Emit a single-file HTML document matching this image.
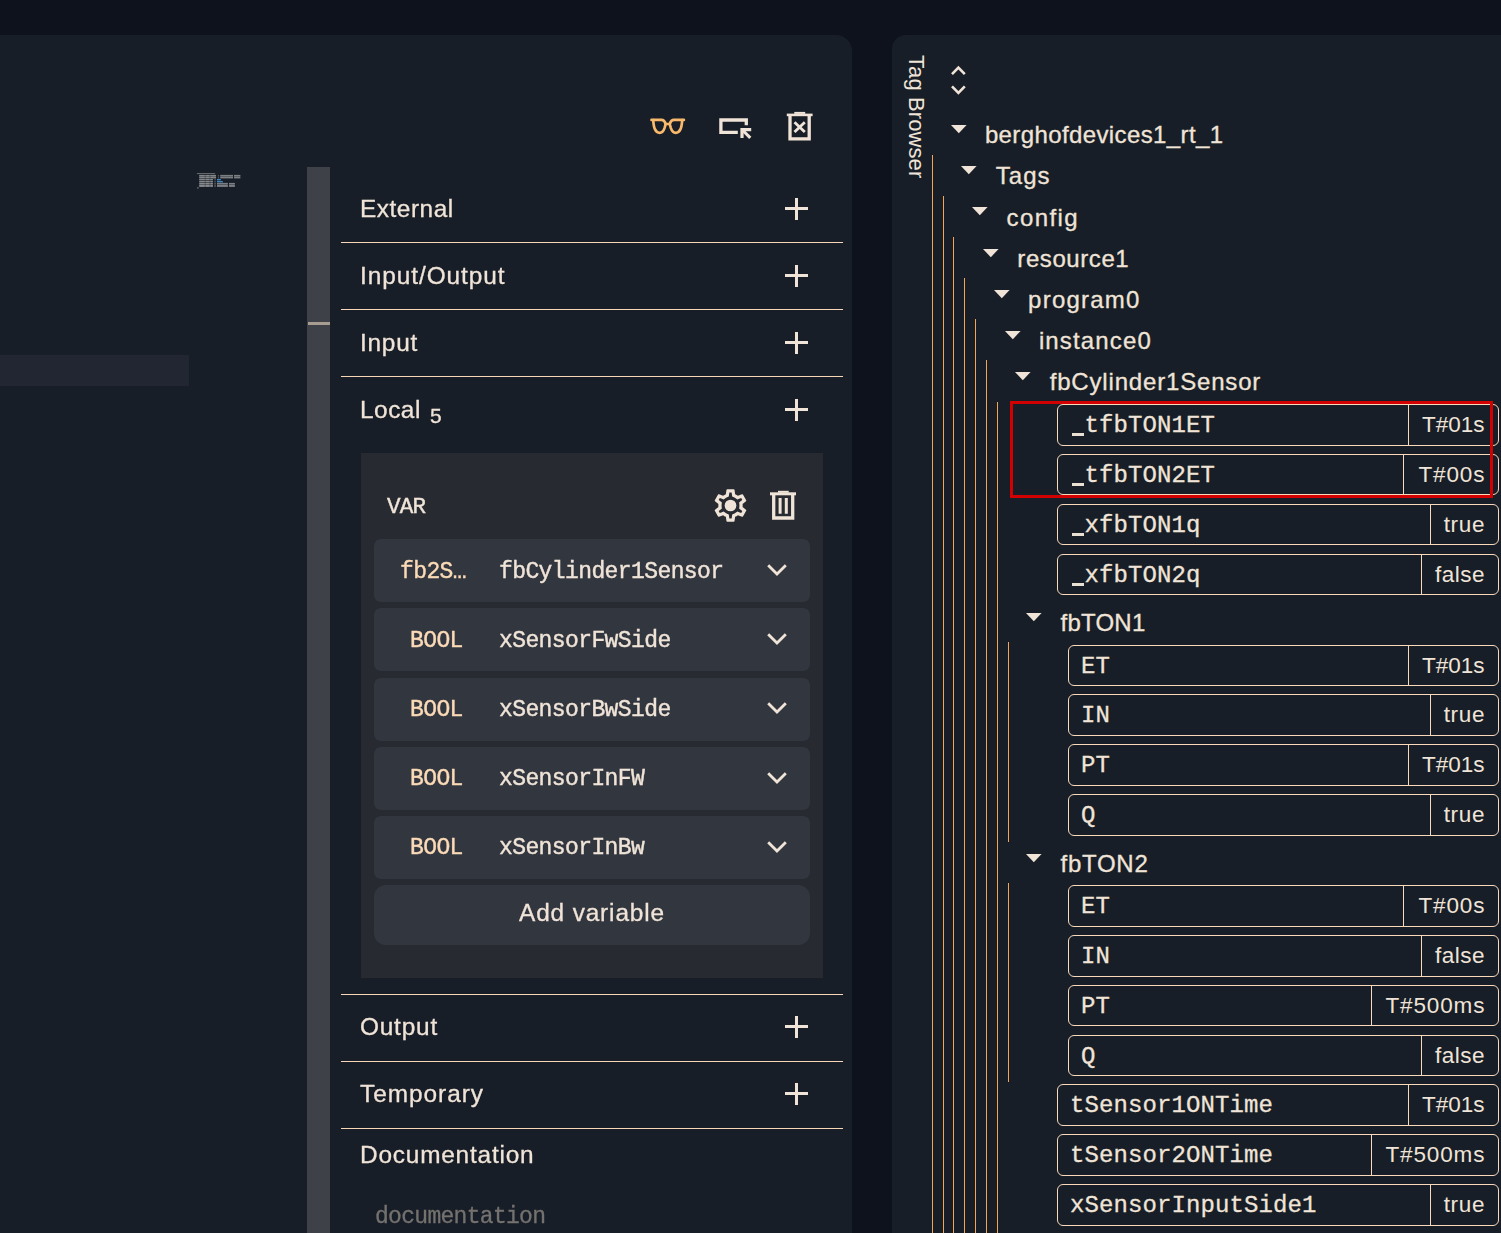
<!DOCTYPE html>
<html><head><meta charset="utf-8"><title>Tag Browser</title>
<style>
html,body{margin:0;padding:0;background:#0e121d;}
body{width:1501px;height:1233px;overflow:hidden;position:relative;font-family:"Liberation Sans",sans-serif;}
.a{position:absolute;display:block}
.t{position:absolute;white-space:pre;line-height:1;}
.s{font-family:"Liberation Sans",sans-serif}
.m{font-family:"Liberation Mono",monospace}
.g{will-change:transform}
.bx{box-sizing:border-box;border:1px solid #fbdabb;border-radius:6px}
</style></head><body>
<div class="a" style="left:-40.00px;top:35.00px;width:892.00px;height:1300.00px;background:#181e27;border-radius:16px;"></div>
<div class="a" style="left:892.00px;top:35.00px;width:700.00px;height:1300.00px;background:#181e27;border-radius:14px;"></div>
<div class="a" style="left:0.00px;top:355.00px;width:189.00px;height:31.00px;background:#222632;"></div>
<div class="a" style="left:307.00px;top:167.00px;width:23.00px;height:1100.00px;background:#3e4147;"></div>
<div class="a" style="left:308.00px;top:322.00px;width:22.00px;height:3.00px;background:#a89b8f;"></div>
<svg class="a" style="left:190px;top:168px" width="60" height="26" viewBox="190 168 60 26"><rect x="196.90" y="173.00" width="18.20" height="1.10" fill="rgba(205,205,205,0.42)"/><rect x="199.20" y="174.90" width="16.80" height="1.70" fill="rgba(205,205,205,0.60)"/><rect x="217.90" y="174.90" width="0.90" height="1.70" fill="rgba(205,205,205,0.35)"/><rect x="220.20" y="174.90" width="12.80" height="1.70" fill="rgba(205,205,205,0.55)"/><rect x="234.00" y="174.90" width="6.40" height="1.70" fill="rgba(205,205,205,0.55)"/><rect x="199.20" y="176.90" width="16.80" height="1.50" fill="rgba(205,205,205,0.60)"/><rect x="217.90" y="176.90" width="0.90" height="1.50" fill="rgba(205,205,205,0.35)"/><rect x="220.20" y="176.90" width="12.80" height="1.50" fill="rgba(205,205,205,0.55)"/><rect x="234.00" y="176.90" width="6.40" height="1.50" fill="rgba(205,205,205,0.55)"/><rect x="199.20" y="178.90" width="13.70" height="1.50" fill="rgba(205,205,205,0.60)"/><rect x="214.40" y="178.90" width="1.40" height="1.50" fill="rgba(205,205,205,0.30)"/><rect x="199.20" y="181.00" width="13.70" height="1.40" fill="rgba(205,205,205,0.60)"/><rect x="214.40" y="181.00" width="1.40" height="1.40" fill="rgba(205,205,205,0.30)"/><rect x="199.20" y="182.90" width="13.70" height="1.70" fill="rgba(205,205,205,0.62)"/><rect x="214.30" y="182.90" width="1.50" height="1.70" fill="rgba(205,205,205,0.35)"/><rect x="217.00" y="182.90" width="10.90" height="1.70" fill="rgba(205,205,205,0.55)"/><rect x="229.00" y="182.90" width="5.90" height="1.70" fill="rgba(205,205,205,0.55)"/><rect x="199.20" y="185.00" width="13.70" height="1.90" fill="rgba(205,205,205,0.62)"/><rect x="214.30" y="185.00" width="1.50" height="1.90" fill="rgba(205,205,205,0.35)"/><rect x="217.00" y="185.00" width="10.90" height="1.90" fill="rgba(205,205,205,0.55)"/><rect x="229.00" y="185.00" width="5.90" height="1.90" fill="rgba(205,205,205,0.55)"/><rect x="217.00" y="178.90" width="3.80" height="1.50" fill="rgba(70,150,215,.85)"/><rect x="217.00" y="181.00" width="5.90" height="1.40" fill="rgba(70,150,215,.85)"/><rect x="197.00" y="186.90" width="1.80" height="1.90" fill="rgba(205,205,205,0.30)"/><rect x="204.80" y="174.90" width="0.70" height="12.00" fill="rgba(24,30,39,.5)"/><rect x="209.60" y="174.90" width="0.70" height="12.00" fill="rgba(24,30,39,.5)"/></svg>
<svg class="a" style="left:646px;top:110px" width="44" height="32" viewBox="646 110 44 32" fill="none" stroke="#f8b96c" stroke-width="2.7" stroke-linecap="round" stroke-linejoin="round"><path d="M651.5 119.9H661.6C664 119.9 665 121.9 665.7 124"/><path d="M653.2 120.1C653.5 124.3 653.9 127.1 654.9 129.2C656 131.6 657.7 132.8 659.6 132.8C662 132.8 663.6 130.9 664.5 128.1C665 126.4 665.4 125.1 665.7 124"/><g transform="translate(1335.4,0) scale(-1,1)"><path d="M651.5 119.9H661.6C664 119.9 665 121.9 665.7 124"/><path d="M653.2 120.1C653.5 124.3 653.9 127.1 654.9 129.2C656 131.6 657.7 132.8 659.6 132.8C662 132.8 663.6 130.9 664.5 128.1C665 126.4 665.4 125.1 665.7 124"/></g><path d="M665.7 124H669.7"/></svg>
<svg class="a" style="left:715px;top:114px" width="40" height="28" viewBox="715 114 40 28" fill="none" stroke="#f0e4d8" stroke-width="3.3" stroke-linejoin="miter">
<path d="M737.8 132.4H720.9V120H746.3V125.3"/>
<path d="M742 137.9V129.6H751.2" stroke-width="3.2"/>
<path d="M742.4 130L750.3 137.8" stroke-width="3.1"/>
</svg>
<svg class="a" style="left:784px;top:110px" width="32" height="34" viewBox="784 110 32 34" fill="none" stroke="#f0e4d8" stroke-width="3.3">
<path d="M794.3 112.9h10.9" stroke-width="2"/>
<path d="M786.8 114.9h25.8" stroke-width="2.6"/>
<path d="M790 115V138.9H809.2V115"/>
<path d="M794.5 122.2L804.8 132M804.8 122.2L794.5 132" stroke-width="2.8"/>
</svg>
<div class="t s  g" style="top:196.84px;font-size:24.40px;color:#f0e4d8;letter-spacing:0.536px;-webkit-text-stroke:0.30px #f0e4d8;left:360.20px;">External</div>
<div class="a" style="left:785.00px;top:207.40px;width:23.00px;height:3.00px;background:#f0e4d8;"></div>
<div class="a" style="left:795.00px;top:197.90px;width:3.00px;height:22.00px;background:#f0e4d8;"></div>
<div class="t s  g" style="top:263.84px;font-size:24.40px;color:#f0e4d8;letter-spacing:0.934px;-webkit-text-stroke:0.30px #f0e4d8;left:360.20px;">Input/Output</div>
<div class="a" style="left:785.00px;top:274.40px;width:23.00px;height:3.00px;background:#f0e4d8;"></div>
<div class="a" style="left:795.00px;top:264.90px;width:3.00px;height:22.00px;background:#f0e4d8;"></div>
<div class="t s  g" style="top:330.84px;font-size:24.40px;color:#f0e4d8;letter-spacing:0.746px;-webkit-text-stroke:0.30px #f0e4d8;left:360.20px;">Input</div>
<div class="a" style="left:785.00px;top:341.40px;width:23.00px;height:3.00px;background:#f0e4d8;"></div>
<div class="a" style="left:795.00px;top:331.90px;width:3.00px;height:22.00px;background:#f0e4d8;"></div>
<div class="t s  g" style="top:397.74px;font-size:24.40px;color:#f0e4d8;letter-spacing:0.514px;-webkit-text-stroke:0.30px #f0e4d8;left:360.20px;">Local</div>
<div class="a" style="left:785.00px;top:408.30px;width:23.00px;height:3.00px;background:#f0e4d8;"></div>
<div class="a" style="left:795.00px;top:398.80px;width:3.00px;height:22.00px;background:#f0e4d8;"></div>
<div class="t s  g" style="top:1014.64px;font-size:24.40px;color:#f0e4d8;letter-spacing:0.792px;-webkit-text-stroke:0.30px #f0e4d8;left:360.20px;">Output</div>
<div class="a" style="left:785.00px;top:1025.20px;width:23.00px;height:3.00px;background:#f0e4d8;"></div>
<div class="a" style="left:795.00px;top:1015.70px;width:3.00px;height:22.00px;background:#f0e4d8;"></div>
<div class="t s  g" style="top:1081.64px;font-size:24.40px;color:#f0e4d8;letter-spacing:0.971px;-webkit-text-stroke:0.30px #f0e4d8;left:360.20px;">Temporary</div>
<div class="a" style="left:785.00px;top:1092.20px;width:23.00px;height:3.00px;background:#f0e4d8;"></div>
<div class="a" style="left:795.00px;top:1082.70px;width:3.00px;height:22.00px;background:#f0e4d8;"></div>
<div class="t s  g" style="top:405.02px;font-size:21.00px;color:#f0e4d8;-webkit-text-stroke:0.30px #f0e4d8;left:429.60px;">5</div>
<div class="a" style="left:341.00px;top:242.00px;width:502.00px;height:1.00px;background:#f7d7b6;"></div>
<div class="a" style="left:341.00px;top:309.00px;width:502.00px;height:1.00px;background:#f7d7b6;"></div>
<div class="a" style="left:341.00px;top:376.00px;width:502.00px;height:1.00px;background:#f7d7b6;"></div>
<div class="a" style="left:341.00px;top:994.00px;width:502.00px;height:1.00px;background:#f7d7b6;"></div>
<div class="a" style="left:341.00px;top:1061.00px;width:502.00px;height:1.00px;background:#f7d7b6;"></div>
<div class="a" style="left:341.00px;top:1128.00px;width:502.00px;height:1.00px;background:#f7d7b6;"></div>
<div class="t s  g" style="top:1142.54px;font-size:24.40px;color:#f0e4d8;letter-spacing:0.799px;-webkit-text-stroke:0.30px #f0e4d8;left:360.20px;">Documentation</div>
<div class="t m  g" style="top:1206.18px;font-size:23.00px;color:#74726f;letter-spacing:-0.700px;-webkit-text-stroke:0.30px #74726f;left:374.50px;">documentation</div>
<div class="a" style="left:361.00px;top:453.00px;width:462.00px;height:525.00px;background:#272a30;"></div>
<div class="t m  g" style="top:495.69px;font-size:22.60px;color:#f0e4d8;letter-spacing:-0.760px;-webkit-text-stroke:0.40px #f0e4d8;left:387.30px;">VAR</div>
<svg class="a" style="left:710.6px;top:485.5px" width="39" height="39" viewBox="0 0 24 24" fill="#f0e4d8"><path d="M19.43 12.98c.04-.32.07-.64.07-.98 0-.34-.03-.66-.07-.98l2.11-1.65c.19-.15.24-.42.12-.64l-2-3.46a.5.5 0 0 0-.61-.22l-2.49 1c-.52-.4-1.08-.73-1.69-.98l-.38-2.65A.488.488 0 0 0 14 2h-4c-.25 0-.46.18-.49.42l-.38 2.65c-.61.25-1.17.59-1.69.98l-2.49-1a.566.566 0 0 0-.18-.03c-.17 0-.34.09-.43.25l-2 3.46c-.13.22-.07.49.12.64l2.11 1.65c-.04.32-.07.65-.07.98 0 .33.03.66.07.98l-2.11 1.65c-.19.15-.24.42-.12.64l2 3.46a.5.5 0 0 0 .61.22l2.49-1c.52.4 1.08.73 1.69.98l.38 2.65c.03.24.24.42.49.42h4c.25 0 .46-.18.49-.42l.38-2.65c.61-.25 1.17-.59 1.69-.98l2.49 1c.06.02.12.03.18.03.17 0 .34-.09.43-.25l2-3.46c.12-.22.07-.49-.12-.64l-2.11-1.65zm-1.98-1.71c.04.31.05.52.05.73 0 .21-.02.43-.05.73l-.14 1.13.89.7 1.08.84-.7 1.21-1.27-.51-1.04-.42-.9.68c-.43.32-.84.56-1.25.73l-1.06.43-.16 1.13-.2 1.35h-1.4l-.19-1.35-.16-1.13-1.06-.43c-.43-.18-.83-.41-1.23-.71l-.91-.7-1.06.43-1.27.51-.7-1.21 1.08-.84.89-.7-.14-1.13c-.03-.31-.05-.54-.05-.74s.02-.43.05-.73l.14-1.13-.89-.7-1.08-.84.7-1.21 1.27.51 1.04.42.9-.68c.43-.32.84-.56 1.25-.73l1.06-.43.16-1.13.2-1.35h1.39l.19 1.35.16 1.13 1.06.43c.43.18.83.41 1.23.71l.91.7 1.06-.43 1.27-.51.7 1.21-1.07.85-.89.7.14 1.13z"/><circle cx="12" cy="12" r="3.6"/></svg>
<svg class="a" style="left:768px;top:488px" width="30" height="34" viewBox="768 488 30 34" fill="none" stroke="#f0e4d8" stroke-width="3.3">
<path d="M778 491.8h10.7" stroke-width="2"/>
<path d="M770 493.8h26" stroke-width="3"/>
<path d="M773.7 494V518H792.7V494"/>
<path d="M780.1 498V513.7M786.3 498V513.7" stroke-width="3"/>
</svg>
<div class="a" style="left:374.00px;top:539.00px;width:436.00px;height:63.00px;background:#32363f;border-radius:7px;"></div>
<div class="t m  g" style="top:560.58px;font-size:23.00px;color:#fbdab7;letter-spacing:-0.600px;-webkit-text-stroke:0.40px #fbdab7;left:400.00px;">fb2S…</div>
<div class="t m  g" style="top:560.58px;font-size:23.00px;color:#f0e4d8;letter-spacing:-0.600px;-webkit-text-stroke:0.40px #f0e4d8;left:498.60px;">fbCylinder1Sensor</div>
<svg class="a" style="left:764px;top:560.80px" width="26" height="18" viewBox="0 0 26 18" fill="none" stroke="#f0e4d8" stroke-width="2.8"><path d="M4.2 4.2L13 13L21.8 4.2"/></svg>
<div class="a" style="left:374.00px;top:608.00px;width:436.00px;height:63.00px;background:#32363f;border-radius:7px;"></div>
<div class="t m  g" style="top:629.58px;font-size:23.00px;color:#fbdab7;letter-spacing:-0.600px;-webkit-text-stroke:0.40px #fbdab7;left:410.30px;">BOOL</div>
<div class="t m  g" style="top:629.58px;font-size:23.00px;color:#f0e4d8;letter-spacing:-0.600px;-webkit-text-stroke:0.40px #f0e4d8;left:498.60px;">xSensorFwSide</div>
<svg class="a" style="left:764px;top:629.80px" width="26" height="18" viewBox="0 0 26 18" fill="none" stroke="#f0e4d8" stroke-width="2.8"><path d="M4.2 4.2L13 13L21.8 4.2"/></svg>
<div class="a" style="left:374.00px;top:677.60px;width:436.00px;height:63.00px;background:#32363f;border-radius:7px;"></div>
<div class="t m  g" style="top:699.18px;font-size:23.00px;color:#fbdab7;letter-spacing:-0.600px;-webkit-text-stroke:0.40px #fbdab7;left:410.30px;">BOOL</div>
<div class="t m  g" style="top:699.18px;font-size:23.00px;color:#f0e4d8;letter-spacing:-0.600px;-webkit-text-stroke:0.40px #f0e4d8;left:498.60px;">xSensorBwSide</div>
<svg class="a" style="left:764px;top:699.40px" width="26" height="18" viewBox="0 0 26 18" fill="none" stroke="#f0e4d8" stroke-width="2.8"><path d="M4.2 4.2L13 13L21.8 4.2"/></svg>
<div class="a" style="left:374.00px;top:746.80px;width:436.00px;height:63.00px;background:#32363f;border-radius:7px;"></div>
<div class="t m  g" style="top:768.38px;font-size:23.00px;color:#fbdab7;letter-spacing:-0.600px;-webkit-text-stroke:0.40px #fbdab7;left:410.30px;">BOOL</div>
<div class="t m  g" style="top:768.38px;font-size:23.00px;color:#f0e4d8;letter-spacing:-0.600px;-webkit-text-stroke:0.40px #f0e4d8;left:498.60px;">xSensorInFW</div>
<svg class="a" style="left:764px;top:768.60px" width="26" height="18" viewBox="0 0 26 18" fill="none" stroke="#f0e4d8" stroke-width="2.8"><path d="M4.2 4.2L13 13L21.8 4.2"/></svg>
<div class="a" style="left:374.00px;top:815.90px;width:436.00px;height:63.00px;background:#32363f;border-radius:7px;"></div>
<div class="t m  g" style="top:837.48px;font-size:23.00px;color:#fbdab7;letter-spacing:-0.600px;-webkit-text-stroke:0.40px #fbdab7;left:410.30px;">BOOL</div>
<div class="t m  g" style="top:837.48px;font-size:23.00px;color:#f0e4d8;letter-spacing:-0.600px;-webkit-text-stroke:0.40px #f0e4d8;left:498.60px;">xSensorInBw</div>
<svg class="a" style="left:764px;top:837.70px" width="26" height="18" viewBox="0 0 26 18" fill="none" stroke="#f0e4d8" stroke-width="2.8"><path d="M4.2 4.2L13 13L21.8 4.2"/></svg>
<div class="a" style="left:374.00px;top:885.00px;width:436.00px;height:60.00px;background:#32363f;border-radius:12px;"></div>
<div class="t s  g" style="top:901.24px;font-size:24.40px;color:#f0e4d8;letter-spacing:0.863px;-webkit-text-stroke:0.30px #f0e4d8;left:519.00px;">Add variable</div>
<div class="t s" style="left:903.8px;top:55.3px;width:24px;writing-mode:vertical-rl;font-size:22px;letter-spacing:0.1px;line-height:24px;color:#f0e4d8;white-space:nowrap">Tag Browser</div>
<svg class="a" style="left:948px;top:62px" width="22" height="36" viewBox="948 62 22 36" fill="none" stroke="#f0e4d8" stroke-width="2.6"><path d="M952 74.2L958.4 67.6L964.8 74.2"/><path d="M952 86.4L958.4 93L964.8 86.4"/></svg>
<svg class="a" style="left:950.60px;top:124.99px" width="16" height="9" viewBox="0 0 16 9"><path d="M0 0H15.6L7.8 8.2Z" fill="#f0e4d8"/></svg>
<div class="t s " style="top:123.26px;font-size:24.00px;color:#f0e4d8;letter-spacing:0.384px;-webkit-text-stroke:0.30px #f0e4d8;left:984.90px;">berghofdevices1_rt_1</div>
<svg class="a" style="left:961.40px;top:166.16px" width="16" height="9" viewBox="0 0 16 9"><path d="M0 0H15.6L7.8 8.2Z" fill="#f0e4d8"/></svg>
<div class="t s " style="top:164.43px;font-size:24.00px;color:#f0e4d8;letter-spacing:1.076px;-webkit-text-stroke:0.30px #f0e4d8;left:995.70px;">Tags</div>
<svg class="a" style="left:972.20px;top:207.33px" width="16" height="9" viewBox="0 0 16 9"><path d="M0 0H15.6L7.8 8.2Z" fill="#f0e4d8"/></svg>
<div class="t s " style="top:205.60px;font-size:24.00px;color:#f0e4d8;letter-spacing:1.409px;-webkit-text-stroke:0.30px #f0e4d8;left:1006.50px;">config</div>
<svg class="a" style="left:983.00px;top:248.50px" width="16" height="9" viewBox="0 0 16 9"><path d="M0 0H15.6L7.8 8.2Z" fill="#f0e4d8"/></svg>
<div class="t s " style="top:246.77px;font-size:24.00px;color:#f0e4d8;letter-spacing:0.586px;-webkit-text-stroke:0.30px #f0e4d8;left:1017.30px;">resource1</div>
<svg class="a" style="left:993.80px;top:289.67px" width="16" height="9" viewBox="0 0 16 9"><path d="M0 0H15.6L7.8 8.2Z" fill="#f0e4d8"/></svg>
<div class="t s " style="top:287.94px;font-size:24.00px;color:#f0e4d8;letter-spacing:1.223px;-webkit-text-stroke:0.30px #f0e4d8;left:1028.10px;">program0</div>
<svg class="a" style="left:1004.60px;top:330.84px" width="16" height="9" viewBox="0 0 16 9"><path d="M0 0H15.6L7.8 8.2Z" fill="#f0e4d8"/></svg>
<div class="t s " style="top:329.11px;font-size:24.00px;color:#f0e4d8;letter-spacing:1.140px;-webkit-text-stroke:0.30px #f0e4d8;left:1038.90px;">instance0</div>
<svg class="a" style="left:1015.40px;top:372.01px" width="16" height="9" viewBox="0 0 16 9"><path d="M0 0H15.6L7.8 8.2Z" fill="#f0e4d8"/></svg>
<div class="t s " style="top:370.28px;font-size:24.00px;color:#f0e4d8;letter-spacing:0.827px;-webkit-text-stroke:0.30px #f0e4d8;left:1049.70px;">fbCylinder1Sensor</div>
<div class="a bx" style="left:1057px;top:404px;width:442px;height:42px"></div>
<div class="a" style="left:1408.00px;top:404.00px;width:1.00px;height:42.00px;background:#fbdabb;"></div>
<div class="a" style="left:1072.00px;top:432.80px;width:12.00px;height:3.00px;background:#eadfd3;"></div>
<div class="t m " style="top:414.31px;font-size:24.00px;color:#f0e4d8;letter-spacing:0.100px;-webkit-text-stroke:0.28px #f0e4d8;left:1084.50px;">tfbTON1ET</div>
<div class="t s " style="top:414.15px;font-size:22.50px;color:#f0e4d8;letter-spacing:-0.007px;right:16.51px;">T#01s</div>
<div class="a bx" style="left:1057px;top:454px;width:442px;height:41px"></div>
<div class="a" style="left:1403.00px;top:454.00px;width:1.00px;height:41.00px;background:#fbdabb;"></div>
<div class="a" style="left:1072.00px;top:482.80px;width:12.00px;height:3.00px;background:#eadfd3;"></div>
<div class="t m " style="top:464.31px;font-size:24.00px;color:#f0e4d8;letter-spacing:0.100px;-webkit-text-stroke:0.28px #f0e4d8;left:1084.50px;">tfbTON2ET</div>
<div class="t s " style="top:464.15px;font-size:22.50px;color:#f0e4d8;letter-spacing:0.893px;right:15.61px;">T#00s</div>
<div class="a bx" style="left:1057px;top:504px;width:442px;height:41px"></div>
<div class="a" style="left:1430.00px;top:504.00px;width:1.00px;height:41.00px;background:#fbdabb;"></div>
<div class="a" style="left:1072.00px;top:532.80px;width:12.00px;height:3.00px;background:#eadfd3;"></div>
<div class="t m " style="top:514.31px;font-size:24.00px;color:#f0e4d8;letter-spacing:0.100px;-webkit-text-stroke:0.28px #f0e4d8;left:1084.50px;">xfbTON1q</div>
<div class="t s " style="top:514.15px;font-size:22.50px;color:#f0e4d8;letter-spacing:0.682px;right:15.82px;">true</div>
<div class="a bx" style="left:1057px;top:554px;width:442px;height:41px"></div>
<div class="a" style="left:1421.00px;top:554.00px;width:1.00px;height:41.00px;background:#fbdabb;"></div>
<div class="a" style="left:1072.00px;top:582.80px;width:12.00px;height:3.00px;background:#eadfd3;"></div>
<div class="t m " style="top:564.31px;font-size:24.00px;color:#f0e4d8;letter-spacing:0.100px;-webkit-text-stroke:0.28px #f0e4d8;left:1084.50px;">xfbTON2q</div>
<div class="t s " style="top:564.15px;font-size:22.50px;color:#f0e4d8;letter-spacing:0.495px;right:16.01px;">false</div>
<svg class="a" style="left:1026.20px;top:612.88px" width="16" height="9" viewBox="0 0 16 9"><path d="M0 0H15.6L7.8 8.2Z" fill="#f0e4d8"/></svg>
<div class="t s " style="top:611.15px;font-size:24.00px;color:#f0e4d8;letter-spacing:0.235px;-webkit-text-stroke:0.30px #f0e4d8;left:1060.50px;">fbTON1</div>
<div class="a bx" style="left:1068px;top:645px;width:431px;height:41px"></div>
<div class="a" style="left:1408.00px;top:645.00px;width:1.00px;height:41.00px;background:#fbdabb;"></div>
<div class="t m " style="top:655.31px;font-size:24.00px;color:#f0e4d8;letter-spacing:0.100px;-webkit-text-stroke:0.28px #f0e4d8;left:1081.00px;">ET</div>
<div class="t s " style="top:655.15px;font-size:22.50px;color:#f0e4d8;letter-spacing:-0.007px;right:16.51px;">T#01s</div>
<div class="a bx" style="left:1068px;top:694px;width:431px;height:42px"></div>
<div class="a" style="left:1430.00px;top:694.00px;width:1.00px;height:42.00px;background:#fbdabb;"></div>
<div class="t m " style="top:704.31px;font-size:24.00px;color:#f0e4d8;letter-spacing:0.100px;-webkit-text-stroke:0.28px #f0e4d8;left:1081.00px;">IN</div>
<div class="t s " style="top:704.15px;font-size:22.50px;color:#f0e4d8;letter-spacing:0.682px;right:15.82px;">true</div>
<div class="a bx" style="left:1068px;top:744px;width:431px;height:42px"></div>
<div class="a" style="left:1408.00px;top:744.00px;width:1.00px;height:42.00px;background:#fbdabb;"></div>
<div class="t m " style="top:754.31px;font-size:24.00px;color:#f0e4d8;letter-spacing:0.100px;-webkit-text-stroke:0.28px #f0e4d8;left:1081.00px;">PT</div>
<div class="t s " style="top:754.15px;font-size:22.50px;color:#f0e4d8;letter-spacing:-0.007px;right:16.51px;">T#01s</div>
<div class="a bx" style="left:1068px;top:794px;width:431px;height:42px"></div>
<div class="a" style="left:1430.00px;top:794.00px;width:1.00px;height:42.00px;background:#fbdabb;"></div>
<div class="t m " style="top:804.31px;font-size:24.00px;color:#f0e4d8;letter-spacing:0.100px;-webkit-text-stroke:0.28px #f0e4d8;left:1081.00px;">Q</div>
<div class="t s " style="top:804.15px;font-size:22.50px;color:#f0e4d8;letter-spacing:0.682px;right:15.82px;">true</div>
<svg class="a" style="left:1026.20px;top:854.15px" width="16" height="9" viewBox="0 0 16 9"><path d="M0 0H15.6L7.8 8.2Z" fill="#f0e4d8"/></svg>
<div class="t s " style="top:852.42px;font-size:24.00px;color:#f0e4d8;letter-spacing:0.735px;-webkit-text-stroke:0.30px #f0e4d8;left:1060.50px;">fbTON2</div>
<div class="a bx" style="left:1068px;top:885px;width:431px;height:42px"></div>
<div class="a" style="left:1403.00px;top:885.00px;width:1.00px;height:42.00px;background:#fbdabb;"></div>
<div class="t m " style="top:895.31px;font-size:24.00px;color:#f0e4d8;letter-spacing:0.100px;-webkit-text-stroke:0.28px #f0e4d8;left:1081.00px;">ET</div>
<div class="t s " style="top:895.15px;font-size:22.50px;color:#f0e4d8;letter-spacing:0.893px;right:15.61px;">T#00s</div>
<div class="a bx" style="left:1068px;top:935px;width:431px;height:42px"></div>
<div class="a" style="left:1421.00px;top:935.00px;width:1.00px;height:42.00px;background:#fbdabb;"></div>
<div class="t m " style="top:945.31px;font-size:24.00px;color:#f0e4d8;letter-spacing:0.100px;-webkit-text-stroke:0.28px #f0e4d8;left:1081.00px;">IN</div>
<div class="t s " style="top:945.15px;font-size:22.50px;color:#f0e4d8;letter-spacing:0.495px;right:16.01px;">false</div>
<div class="a bx" style="left:1068px;top:985px;width:431px;height:41px"></div>
<div class="a" style="left:1371.00px;top:985.00px;width:1.00px;height:41.00px;background:#fbdabb;"></div>
<div class="t m " style="top:995.31px;font-size:24.00px;color:#f0e4d8;letter-spacing:0.100px;-webkit-text-stroke:0.28px #f0e4d8;left:1081.00px;">PT</div>
<div class="t s " style="top:995.15px;font-size:22.50px;color:#f0e4d8;letter-spacing:0.887px;right:15.61px;">T#500ms</div>
<div class="a bx" style="left:1068px;top:1035px;width:431px;height:41px"></div>
<div class="a" style="left:1421.00px;top:1035.00px;width:1.00px;height:41.00px;background:#fbdabb;"></div>
<div class="t m " style="top:1045.31px;font-size:24.00px;color:#f0e4d8;letter-spacing:0.100px;-webkit-text-stroke:0.28px #f0e4d8;left:1081.00px;">Q</div>
<div class="t s " style="top:1045.15px;font-size:22.50px;color:#f0e4d8;letter-spacing:0.495px;right:16.01px;">false</div>
<div class="a bx" style="left:1057px;top:1084px;width:442px;height:42px"></div>
<div class="a" style="left:1408.00px;top:1084.00px;width:1.00px;height:42.00px;background:#fbdabb;"></div>
<div class="t m " style="top:1094.31px;font-size:24.00px;color:#f0e4d8;letter-spacing:0.100px;-webkit-text-stroke:0.28px #f0e4d8;left:1070.00px;">tSensor1ONTime</div>
<div class="t s " style="top:1094.15px;font-size:22.50px;color:#f0e4d8;letter-spacing:-0.007px;right:16.51px;">T#01s</div>
<div class="a bx" style="left:1057px;top:1134px;width:442px;height:42px"></div>
<div class="a" style="left:1371.00px;top:1134.00px;width:1.00px;height:42.00px;background:#fbdabb;"></div>
<div class="t m " style="top:1144.31px;font-size:24.00px;color:#f0e4d8;letter-spacing:0.100px;-webkit-text-stroke:0.28px #f0e4d8;left:1070.00px;">tSensor2ONTime</div>
<div class="t s " style="top:1144.15px;font-size:22.50px;color:#f0e4d8;letter-spacing:0.887px;right:15.61px;">T#500ms</div>
<div class="a bx" style="left:1057px;top:1184px;width:442px;height:42px"></div>
<div class="a" style="left:1430.00px;top:1184.00px;width:1.00px;height:42.00px;background:#fbdabb;"></div>
<div class="t m " style="top:1194.31px;font-size:24.00px;color:#f0e4d8;letter-spacing:0.100px;-webkit-text-stroke:0.28px #f0e4d8;left:1070.00px;">xSensorInputSide1</div>
<div class="t s " style="top:1194.15px;font-size:22.50px;color:#f0e4d8;letter-spacing:0.682px;right:15.82px;">true</div>
<div class="a" style="left:932.00px;top:155.00px;width:1.00px;height:1078.00px;background:#f3a553;"></div>
<div class="a" style="left:943.00px;top:196.00px;width:1.00px;height:1037.00px;background:#f3a553;"></div>
<div class="a" style="left:953.00px;top:237.00px;width:1.00px;height:996.00px;background:#f3a553;"></div>
<div class="a" style="left:964.00px;top:278.00px;width:1.00px;height:955.00px;background:#f3a553;"></div>
<div class="a" style="left:975.00px;top:319.00px;width:1.00px;height:914.00px;background:#f3a553;"></div>
<div class="a" style="left:986.00px;top:360.00px;width:1.00px;height:873.00px;background:#f3a553;"></div>
<div class="a" style="left:997.00px;top:402.00px;width:1.00px;height:831.00px;background:#f3a553;"></div>
<div class="a" style="left:1008.00px;top:642.00px;width:1.00px;height:200.00px;background:#f3a553;"></div>
<div class="a" style="left:1008.00px;top:883.00px;width:1.00px;height:199.00px;background:#f3a553;"></div>
<div class="a" style="left:1010px;top:401px;width:483px;height:97px;box-sizing:border-box;border:3px solid #d20000"></div>
</body></html>
